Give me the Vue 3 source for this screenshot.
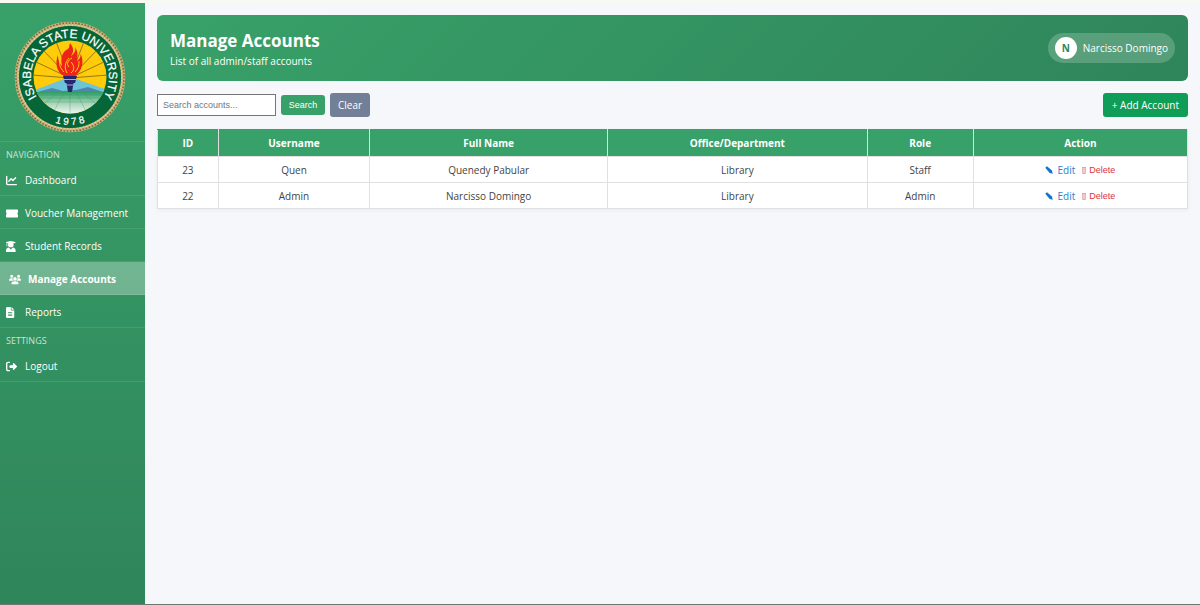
<template>
    <div class="layout">
        <!-- Sidebar -->
        <aside class="sidebar">
            <div class="logo-box">
                <svg class="logo" viewBox="0 0 112 112" role="img" aria-label="Isabela State University">
                    <defs>
                        <path id="ringTop" d="M 27 82 A 39 39 0 1 1 85 82" />
                        <path id="ringBottom" d="M 8 56 A 48 48 0 0 0 104 56" />
                        <clipPath id="sealClip">
                            <circle cx="56" cy="56" r="36.5" />
                        </clipPath>
                        <linearGradient id="field" x1="0" y1="0" x2="0" y2="1">
                            <stop offset="0" stop-color="#2f9e63" />
                            <stop offset="0.45" stop-color="#a5d3b5" />
                            <stop offset="1" stop-color="#ffffff" />
                        </linearGradient>
                    </defs>
                    <circle cx="56" cy="56" r="53" fill="none" stroke="#c9b27a" stroke-width="4.5" />
                    <circle cx="56" cy="56" r="54" fill="none" stroke="#7d6a3c" stroke-width="1.6" stroke-dasharray="1.6 1.6" />
                    <circle cx="56" cy="56" r="52" fill="none" stroke="#e3d5a6" stroke-width="1.2" stroke-dasharray="1.6 1.6" />
                    <circle cx="56" cy="56" r="51" fill="#056638" />
                    <g clip-path="url(#sealClip)">
                        <rect x="18" y="18" width="76" height="76" fill="#ffcb0a" />
                        <g stroke="#7a6410" stroke-width="0.8">
                            <path d="M56 57 L18 54 M56 57 L20 40 M56 57 L27 27 M56 57 L41 18 M56 57 L71 18 M56 57 L85 27 M56 57 L92 40 M56 57 L94 54" />
                        </g>
                        <path d="M18 70 L50 58 L62 58 L94 69 L94 74 L18 74 Z" fill="#6cc4d8" />
                        <path d="M20 72 L38 67 L49 70 L62 69 L74 66 L92 72 Z" fill="#4f86ae" />
                        <rect x="18" y="71" width="76" height="24" fill="url(#field)" />
                        <g stroke="#2b9160" stroke-width="0.5" opacity="0.6">
                            <path d="M18 74 H94 M18 77 H94 M18 81 H94 M56 71 V94 M50 71 L38 94 M62 71 L74 94 M44 71 L22 90 M68 71 L90 90" />
                        </g>
                    </g>
                    <path d="M49 55 H63 L61 62 H59.500 L58 71 H54 L52.500 62 H51 Z" fill="#25286f" />
                    <path d="M50 58.500 H62 M53 64 H59" stroke="#c9cde8" stroke-width="0.8" />
                    <path d="M50 55 C42 51 41 41 44 34 C44 40 46 43 48 45 C46 36 49 30 54 28 C56 26 55 24 56 22 C61 28 59 32 57 35 C61 32 62 29 61 26 C65 32 63 37 63 40 C67 37 67 34 66 32 C71 40 68 50 61 55 Z" fill="#ee2418" />
                    <path d="M50 51 C46 47 45 43 46 40 M53 52 C50 47 51 41 55 37 M57 52 C62 48 59 43 57 41 M61 51 C65 47 65 43 65 40 M55 46 C52 43 54 39 58 37" fill="none" stroke="#ffcb0a" stroke-width="1" />
                    <text class="seal-name" text-anchor="middle">
                        <textPath href="#ringTop" startOffset="50%">ISABELA STATE UNIVERSITY</textPath>
                    </text>
                    <text class="seal-year" text-anchor="middle">
                        <textPath href="#ringBottom" startOffset="50%">1 9 7 8</textPath>
                    </text>
                </svg>
            </div>

            <nav>
                <div v-for="group in menu" :key="group.title">
                    <h2 class="nav-title">{{ group.title }}</h2>
                    <a
                        v-for="item in group.items"
                        :key="item.label"
                        href="#"
                        class="nav-link"
                        :class="{ active: item.label === current }"
                        @click.prevent="current = item.label"
                    >
                        <svg class="nav-icon" :viewBox="item.box" preserveAspectRatio="xMinYMid meet" aria-hidden="true">
                            <path :d="item.icon" fill="currentColor" fill-rule="evenodd" />
                        </svg>
                        <span>{{ item.label }}</span>
                    </a>
                </div>
            </nav>
        </aside>

        <!-- Main content -->
        <main class="content">
            <header class="page-header">
                <div>
                    <h1>Manage Accounts</h1>
                    <p>List of all admin/staff accounts</p>
                </div>
                <div class="user-chip">
                    <span class="avatar">N</span>
                    <span>Narcisso Domingo</span>
                </div>
            </header>

            <div class="toolbar">
                <form class="search-form" @submit.prevent="applySearch">
                    <input v-model="search" type="text" placeholder="Search accounts..." aria-label="Search accounts">
                    <button type="submit" class="search-btn">Search</button>
                    <a href="#" class="clear-btn" @click.prevent="clearSearch">Clear</a>
                </form>
                <a href="#" class="add-btn" @click.prevent>+ Add Account</a>
            </div>

            <table class="accounts">
                <colgroup>
                    <col class="col-id">
                    <col class="col-username">
                    <col class="col-name">
                    <col class="col-office">
                    <col class="col-role">
                    <col class="col-action">
                </colgroup>
                <thead>
                    <tr>
                        <th>ID</th>
                        <th>Username</th>
                        <th>Full Name</th>
                        <th>Office/Department</th>
                        <th>Role</th>
                        <th>Action</th>
                    </tr>
                </thead>
                <tbody>
                    <tr v-for="account in filtered" :key="account.id">
                        <td>{{ account.id }}</td>
                        <td>{{ account.username }}</td>
                        <td>{{ account.name }}</td>
                        <td>{{ account.office }}</td>
                        <td>{{ account.role }}</td>
                        <td>
                            <div class="actions">
                                <a href="#" class="edit-link" @click.prevent>
                                    <svg class="pencil" viewBox="0 0 9 9" aria-hidden="true">
                                        <path d="M0.300 2 L2.300 0.300 L7.800 5.200 L8.700 8.700 L5.200 7.800 Z" fill="#1673d1" />
                                    </svg>
                                    Edit
                                </a>
                                <button type="button" class="delete-btn" @click="remove(account.id)">
                                    <svg class="trash" viewBox="0 0 4 7" aria-hidden="true">
                                        <path d="M0 0.500 H4 M0.700 0.500 V6.500 M3.300 0.500 V6.500 M0.700 6.500 H3.300 M2 1 V6" fill="none" stroke="#e58f8f" stroke-width="0.8" />
                                    </svg>
                                    Delete
                                </button>
                            </div>
                        </td>
                    </tr>
                </tbody>
            </table>
        </main>
    </div>
</template>

<script setup>
import { ref, computed } from 'vue';

const current = ref('Manage Accounts');
const search = ref('');
const keyword = ref('');

const menu = [
    {
        title: 'NAVIGATION',
        items: [
            {
                label: 'Dashboard',
                box: '0 0 512 512',
                icon: 'M64 64c0-17.700-14.300-32-32-32S0 46.300 0 64V400c0 44.200 35.800 80 80 80H480c17.700 0 32-14.300 32-32s-14.300-32-32-32H80c-8.800 0-16-7.200-16-16V64zm406.600 86.600c12.500-12.500 12.500-32.800 0-45.300s-32.800-12.500-45.300 0L320 210.700l-57.400-57.400c-12.500-12.500-32.800-12.500-45.300 0l-112 112c-12.500 12.500-12.500 32.800 0 45.300s32.800 12.500 45.300 0L240 221.300l57.400 57.400c12.500 12.500 32.800 12.500 45.300 0l128-128z'
            },
            {
                label: 'Voucher Management',
                box: '0 0 576 512',
                icon: 'M48 64C20 64 0 84 0 112v100c18 0 28 20 28 44s-10 44-28 44v100c0 28 20 48 48 48H528c28 0 48-20 48-48V300c-18 0-28-20-28-44s10-44 28-44V112c0-28-20-48-48-48H48z'
            },
            {
                label: 'Student Records',
                box: '0 0 448 512',
                icon: 'M219 4 L20 50 C-5 56 -5 90 20 96 L32 99 V145 C18 153 18 175 31 184 L12 250 H72 L54 184 C67 173 66 153 54 145 V105 L112 118 C100 150 92 180 96 205 C104 270 158 288 224 288 S344 270 352 205 C356 180 348 150 336 118 L428 96 C453 90 453 56 428 50 L230 4 Z M130 304 C55 308 0 366 0 438 V512 H448 V438 C448 366 393 308 318 304 L224 400 Z'
            },
            {
                label: 'Manage Accounts',
                box: '0 0 640 512',
                icon: 'M144 0a80 80 0 1 1 0 160A80 80 0 1 1 144 0zM512 0a80 80 0 1 1 0 160A80 80 0 1 1 512 0zM0 298.700C0 239.800 47.800 192 106.700 192h42.700c15.900 0 31 3.500 44.600 9.700c-1.300 7.200-1.900 14.700-1.900 22.300c0 38.200 16.800 72.500 43.300 96H21.300C9.600 320 0 310.400 0 298.700zM405.300 320c26.600-23.500 43.300-57.800 43.300-96c0-7.600-.7-15-1.900-22.300c13.600-6.300 28.700-9.700 44.600-9.700h42.700C592.200 192 640 239.800 640 298.700c0 11.800-9.600 21.300-21.300 21.300H405.300zM224 224a96 96 0 1 1 192 0a96 96 0 1 1-192 0zM128 485.300C128 411.700 187.700 352 261.300 352H378.700C452.300 352 512 411.700 512 485.300c0 14.700-11.900 26.700-26.700 26.700H154.700c-14.700 0-26.700-11.900-26.700-26.700z'
            },
            {
                label: 'Reports',
                box: '0 0 384 512',
                icon: 'M64 0C28.700 0 0 28.700 0 64V448c0 35.300 28.700 64 64 64H320c35.300 0 64-28.700 64-64V160H256c-17.700 0-32-14.300-32-32V0H64zM256 0V128H384L256 0zM96 240H288V280H96zM96 310H288V350H96zM96 380H288V420H96z'
            }
        ]
    },
    {
        title: 'SETTINGS',
        items: [
            {
                label: 'Logout',
                box: '0 0 512 512',
                icon: 'M502.600 278.600c12.500-12.500 12.500-32.800 0-45.300l-128-128C354 85 320 100 320 128v64H192c-17 0-32 14-32 32v64c0 18 15 32 32 32H320v64c0 28 34 43 54.600 22.600l128-128zM160 96c17.700 0 32-14.300 32-32s-14.300-32-32-32H96C43 32 0 75 0 128V384c0 53 43 96 96 96h64c17.700 0 32-14.300 32-32s-14.300-32-32-32H96c-17.700 0-32-14.300-32-32V128c0-17.700 14.300-32 32-32h64z'
            }
        ]
    }
];

const accounts = ref([
    { id: 23, username: 'Quen', name: 'Quenedy Pabular', office: 'Library', role: 'Staff' },
    { id: 22, username: 'Admin', name: 'Narcisso Domingo', office: 'Library', role: 'Admin' }
]);

const filtered = computed(() => {
    const q = keyword.value.toLowerCase();
    return accounts.value.filter((a) => `${a.username} ${a.name} ${a.office}`.toLowerCase().includes(q));
});

const applySearch = () => {
    keyword.value = search.value;
};

const clearSearch = () => {
    search.value = '';
    keyword.value = '';
};

const remove = (id) => {
    accounts.value = accounts.value.filter((a) => a.id !== id);
};
</script>

<style>
body {
    margin: 0;
    background: #f5f7fb;
}
</style>

<style scoped>
* {
    box-sizing: border-box;
}

.layout {
    display: flex;
    min-height: 100vh;
    border-top: 3px solid #f6faf3;
    border-bottom: 1px solid #6f7672;
    font-family: "Segoe UI", "Open Sans", "Noto Sans", sans-serif;
    font-size: 10px;
    color: #444444;
}

a {
    text-decoration: none;
}

/* Sidebar */
.sidebar {
    flex: 0 0 145px;
    background: linear-gradient(180deg, #38a169, #2f855a);
    color: #ffffff;
}

.logo-box {
    display: flex;
    justify-content: center;
    padding: 18px 0 8px;
    border-bottom: 1px solid rgba(255, 255, 255, 0.1);
}

.logo {
    width: 112px;
    height: 112px;
    margin-left: -6px;
}

.seal-name,
.seal-year {
    font-family: "Liberation Sans", Arial, sans-serif;
    fill: #ffffff;
    stroke: #ffffff;
    stroke-width: 0.2px;
}

.seal-name {
    font-size: 12px;
}

.seal-year {
    font-size: 10px;
}

.nav-title {
    margin: 0;
    padding: 5px 6px 0;
    height: 21px;
    font-size: 9px;
    line-height: 16px;
    font-weight: 400;
    color: rgba(255, 255, 255, 0.75);
}

.nav-link {
    display: flex;
    align-items: center;
    gap: 7px;
    height: 33px;
    padding: 2px 6px 0;
    border-bottom: 1px solid rgba(255, 255, 255, 0.1);
    color: #ffffff;
}

.nav-link.active {
    padding-left: 9px;
    background: rgba(255, 255, 255, 0.3);
    font-weight: 700;
}

.nav-icon {
    width: 12px;
    height: 11px;
}

/* Header */
.content {
    flex: 1;
    min-width: 0;
    padding: 12px;
}

.page-header {
    display: flex;
    align-items: center;
    justify-content: space-between;
    padding: 13px;
    border-radius: 6px;
    background: linear-gradient(135deg, #38a169, #2f855a);
    color: #ffffff;
}

.page-header h1 {
    margin: 0;
    font-size: 17px;
    line-height: 26px;
    font-weight: 700;
}

.page-header p {
    margin: 0;
    line-height: 14px;
}

.user-chip {
    display: flex;
    align-items: center;
    gap: 6px;
    padding: 4px 7px;
    border-radius: 16px;
    background: rgba(255, 255, 255, 0.2);
}

.avatar {
    width: 22px;
    height: 22px;
    border-radius: 50%;
    background: #ffffff;
    color: #2f855a;
    font-weight: 700;
    line-height: 22px;
    text-align: center;
}

/* Toolbar */
.toolbar {
    display: flex;
    align-items: center;
    justify-content: space-between;
    margin: 12px 0;
}

.search-form {
    display: flex;
    align-items: center;
    gap: 5px;
}

.search-form input {
    width: 119px;
    height: 22px;
    padding: 0 5px;
    border: 1px solid #767676;
    background: #ffffff;
    font-family: "Liberation Sans", Arial, sans-serif;
    font-size: 9px;
}

.search-form input::placeholder {
    color: #757575;
}

.search-btn {
    width: 44px;
    height: 20px;
    padding: 0;
    border: none;
    border-radius: 3px;
    background: #38a169;
    color: #ffffff;
    font-family: "Liberation Sans", Arial, sans-serif;
    font-size: 9px;
    cursor: pointer;
}

.clear-btn,
.add-btn {
    height: 24px;
    border-radius: 3px;
    line-height: 24px;
    color: #ffffff;
}

.clear-btn {
    padding: 0 8px;
    background: #718096;
}

.add-btn {
    padding: 0 9px;
    background: #0f9d58;
}

/* Accounts table */
.accounts {
    width: 100%;
    table-layout: fixed;
    border-collapse: collapse;
    background: #ffffff;
    box-shadow: 0 1px 4px rgba(0, 0, 0, 0.05);
}

.accounts th,
.accounts td {
    padding: 6px;
    border: 1px solid #e0e0e0;
    line-height: 14px;
    text-align: center;
}

.accounts th {
    border-top-color: #38a169;
    background: #38a169;
    color: #ffffff;
}

.accounts td {
    padding: 6px 6px 5px;
}

.col-id {
    width: 5.9%;
}

.col-username {
    width: 14.7%;
}

.col-name {
    width: 23.1%;
}

.col-office {
    width: 25.2%;
}

.col-role {
    width: 10.3%;
}

.actions {
    display: flex;
    align-items: center;
    justify-content: center;
    gap: 7px;
    height: 14px;
}

.edit-link {
    display: flex;
    align-items: center;
    gap: 4px;
    color: #2b7fce;
}

.pencil {
    width: 8px;
    height: 8px;
}

.delete-btn {
    display: flex;
    align-items: center;
    gap: 3px;
    padding: 0;
    border: none;
    background: none;
    color: #d9363e;
    font-family: "Liberation Sans", Arial, sans-serif;
    font-size: 9px;
    cursor: pointer;
}

.trash {
    width: 4px;
    height: 7px;
}
</style>
